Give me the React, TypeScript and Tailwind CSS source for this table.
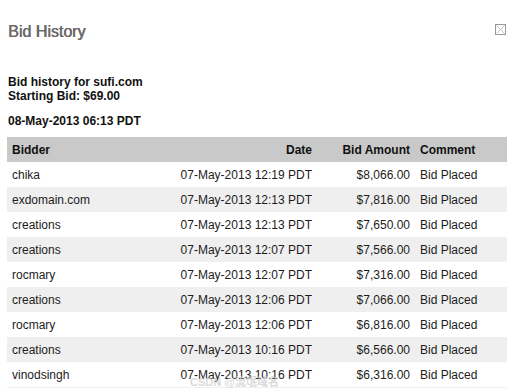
import React from "react";

const rows = [
  ["chika", "07-May-2013 12:19 PDT", "$8,066.00"],
  ["exdomain.com", "07-May-2013 12:13 PDT", "$7,816.00"],
  ["creations", "07-May-2013 12:13 PDT", "$7,650.00"],
  ["creations", "07-May-2013 12:07 PDT", "$7,566.00"],
  ["rocmary", "07-May-2013 12:07 PDT", "$7,316.00"],
  ["creations", "07-May-2013 12:06 PDT", "$7,066.00"],
  ["rocmary", "07-May-2013 12:06 PDT", "$6,816.00"],
  ["creations", "07-May-2013 10:16 PDT", "$6,566.00"],
  ["vinodsingh", "07-May-2013 10:16 PDT", "$6,316.00"],
];

export default function App() {
  return (
    <div
      className="relative w-[518px] h-[388px] overflow-hidden bg-white"
      style={{ fontFamily: '"Liberation Sans", Arial, sans-serif' }}
    >
      <div className="flex items-start justify-between pl-[8px] pr-[12px] pt-[22px]">
        <h1 className="text-[16px] leading-[20px] text-[#6b6867] [text-shadow:0.6px_0_0_#6b6867]">
          Bid History
        </h1>
        <svg width="11" height="11" viewBox="0 0 11 11" className="mt-[2px]">
          <rect x="0.5" y="0.5" width="10" height="10" fill="none" stroke="#9a9a9a" />
          <path d="M1.5 1.5 L9.5 9.5 M9.5 1.5 L1.5 9.5" stroke="#c4c4c4" strokeWidth="1" />
        </svg>
      </div>

      <div className="pl-[8px] mt-[33px] text-[12px] leading-[14px] font-bold text-[#111]">
        <div>Bid history for sufi.com</div>
        <div>Starting Bid: $69.00</div>
        <div className="mt-[11px]">08-May-2013 06:13 PDT</div>
      </div>

      <div className="ml-[7px] mt-[9px] w-[500px] text-[12px] leading-[24px]">
        <div className="grid grid-cols-[163px_147px_98px_92px] pt-[1px] bg-[#c9c9c9] font-bold text-[#111]">
          <div className="pl-[5px]">Bidder</div>
          <div className="pr-[5px] text-right">Date</div>
          <div className="pr-[5px] text-right">Bid Amount</div>
          <div className="pl-[5px]">Comment</div>
        </div>
        {rows.map((r, i) => (
          <div
            key={i}
            className={
              "grid grid-cols-[163px_147px_98px_92px] pt-[1px] text-[#1c1c1c] " +
              (i % 2 === 1 ? "bg-[#efefef]" : "bg-white")
            }
          >
            <div className="pl-[5px]">{r[0]}</div>
            <div className="pr-[5px] text-right">{r[1]}</div>
            <div className="pr-[5px] text-right">{r[2]}</div>
            <div className="pl-[5px]">Bid Placed</div>
          </div>
        ))}
        <div className="h-[25px] bg-[#efefef]" />
      </div>

      <div
        className="absolute left-[190px] top-[376px] text-[11px] leading-[12px] font-bold text-[#d0d0d0]/80 whitespace-nowrap"
        style={{ fontFamily: '"Liberation Sans", "Noto Sans CJK SC", sans-serif' }}
      >
        CSDN @流氓域名
      </div>
    </div>
  );
}
